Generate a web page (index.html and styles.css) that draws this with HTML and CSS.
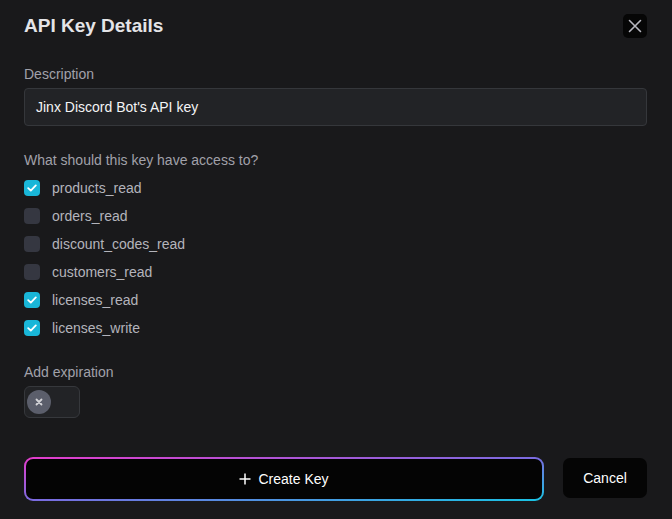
FILE: index.html
```html
<!DOCTYPE html>
<html>
<head>
<meta charset="utf-8">
<link rel="stylesheet" href="styles.css">
</head>
<body>
<div class="dialog">
  <div class="header">
    <h1 class="title">API Key Details</h1>
    <button class="close" aria-label="Close">
      <svg width="14" height="14" viewBox="0 0 14 14"><path d="M1.5 1.5L12.5 12.5M12.5 1.5L1.5 12.5" stroke="#b8b8c0" stroke-width="1.6" stroke-linecap="round"/></svg>
    </button>
  </div>

  <label class="label label-desc">Description</label>
  <div class="input">Jinx Discord Bot's API key</div>

  <div class="label label-q">What should this key have access to?</div>
  <ul class="checks">
    <li class="check"><span class="box on"><svg width="10" height="8" viewBox="0 0 10 8"><path d="M1.2 4.2L3.8 6.6L8.8 1.4" fill="none" stroke="#fff" stroke-width="1.8" stroke-linecap="round" stroke-linejoin="round"/></svg></span>products_read</li>
    <li class="check"><span class="box"></span>orders_read</li>
    <li class="check"><span class="box"></span>discount_codes_read</li>
    <li class="check"><span class="box"></span>customers_read</li>
    <li class="check"><span class="box on"><svg width="10" height="8" viewBox="0 0 10 8"><path d="M1.2 4.2L3.8 6.6L8.8 1.4" fill="none" stroke="#fff" stroke-width="1.8" stroke-linecap="round" stroke-linejoin="round"/></svg></span>licenses_read</li>
    <li class="check"><span class="box on"><svg width="10" height="8" viewBox="0 0 10 8"><path d="M1.2 4.2L3.8 6.6L8.8 1.4" fill="none" stroke="#fff" stroke-width="1.8" stroke-linecap="round" stroke-linejoin="round"/></svg></span>licenses_write</li>
  </ul>

  <div class="label label-exp">Add expiration</div>
  <div class="toggle">
    <span class="knob"><svg width="8" height="8" viewBox="0 0 8 8"><path d="M1.5 1.5L6.5 6.5M6.5 1.5L1.5 6.5" stroke="#d4d4d8" stroke-width="1.8" stroke-linecap="round"/></svg></span>
  </div>

  <div class="actions">
    <button class="create">
      <span class="create-inner">
        <svg width="12" height="12" viewBox="0 0 12 12"><path d="M6 0.5V11.5M0.5 6H11.5" stroke="#fff" stroke-width="1.5"/></svg>
        Create Key
      </span>
    </button>
    <button class="cancel">Cancel</button>
  </div>
</div>
</body>
</html>
```

FILE: styles.css
```css
html, body {
  margin: 0;
  padding: 0;
  background: #19191b;
}
body {
  font-family: "Liberation Sans", Arial, sans-serif;
  color: #e4e4e7;
}
.dialog {
  width: 672px;
  height: 519px;
  box-sizing: border-box;
  padding: 14px 25px 0 24px;
  display: flex;
  flex-direction: column;
}
.header {
  display: flex;
  align-items: center;
  justify-content: space-between;
  height: 24px;
}
.title {
  margin: 0;
  font-size: 19px;
  font-weight: 700;
  color: #e4e4e7;
  line-height: 24px;
}
.close {
  width: 24px;
  height: 24px;
  border: none;
  padding: 0;
  border-radius: 5px;
  background: #060606;
  display: flex;
  align-items: center;
  justify-content: center;
}
.label {
  font-size: 14px;
  line-height: 20px;
  color: #a1a1aa;
}
.label-desc {
  margin-top: 26px;
}
.input {
  margin-top: 4px;
  height: 38px;
  box-sizing: border-box;
  border: 1px solid #35373b;
  background: #222326;
  border-radius: 4px;
  padding: 0 11px;
  display: flex;
  align-items: center;
  font-size: 14px;
  color: #f4f4f5;
}
.label-q {
  margin-top: 24px;
}
.checks {
  list-style: none;
  margin: 8px 0 0;
  padding: 0;
  display: flex;
  flex-direction: column;
  gap: 8px;
}
.check {
  display: flex;
  align-items: center;
  height: 20px;
  font-size: 14px;
  color: #b4b4bb;
  gap: 12px;
}
.box {
  width: 16px;
  height: 16px;
  border-radius: 4px;
  background: #353741;
  display: flex;
  align-items: center;
  justify-content: center;
}
.box.on {
  background: #19b6d8;
}
.label-exp {
  margin-top: 24px;
}
.toggle {
  margin-top: 4px;
  width: 56px;
  height: 32px;
  box-sizing: border-box;
  border: 1px solid #36383c;
  border-radius: 6px;
  background: #222326;
  display: flex;
  align-items: center;
  padding-left: 2px;
}
.knob {
  width: 24px;
  height: 24px;
  border-radius: 50%;
  background: #5b5e6b;
  display: flex;
  align-items: center;
  justify-content: center;
}
.actions {
  margin-top: 39px;
  display: flex;
  align-items: center;
  gap: 19px;
}
.create {
  width: 520px;
  height: 44px;
  border: none;
  padding: 2px;
  border-radius: 9px;
  background: linear-gradient(to bottom right, #e63ccc, #7b6be0 50%, #18c4e4);
  cursor: pointer;
}
.create-inner {
  display: flex;
  align-items: center;
  justify-content: center;
  gap: 7px;
  width: 100%;
  height: 100%;
  background: #040404;
  border-radius: 7px;
  color: #fff;
  font-family: "Liberation Sans", Arial, sans-serif;
  font-size: 14px;
}
.cancel {
  width: 84px;
  height: 40px;
  border: none;
  border-radius: 7px;
  background: #050505;
  color: #fff;
  font-family: "Liberation Sans", Arial, sans-serif;
  font-size: 14px;
  padding: 0;
  margin-top: -2px;
}
```
